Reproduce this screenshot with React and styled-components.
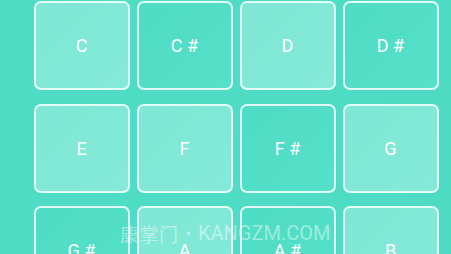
import React from "react";
import styled, { createGlobalStyle } from "styled-components";

const GlobalStyle = createGlobalStyle`
  html, body {
    margin: 0;
    padding: 0;
    background: #4fdcc4;
    overflow: hidden;
  }
  body {
    font-family: Roboto, "Noto Sans", sans-serif;
  }
`;

const notes = [
  { name: "C", light: true },
  { name: "C #", light: false },
  { name: "D", light: true },
  { name: "D #", light: false },
  { name: "E", light: true },
  { name: "F", light: true },
  { name: "F #", light: false },
  { name: "G", light: true },
  { name: "G #", light: false },
  { name: "A", light: true },
  { name: "A #", light: false },
  { name: "B", light: true },
];

export default function App() {
  return (
    <>
      <GlobalStyle />
      <Screen>
        <Pad>
          {notes.map((note) => (
            <Key key={note.name} $light={note.light}>
              {note.name}
            </Key>
          ))}
        </Pad>
        <Watermark>
          <Han>康掌门</Han>
          <Dot>•</Dot>
          <Site>KANGZM.COM</Site>
        </Watermark>
      </Screen>
    </>
  );
}

const Screen = styled.div`
  position: relative;
  width: 451px;
  height: 254px;
  overflow: hidden;
  background: linear-gradient(90deg, #50ddc5 0%, #4edbc3 100%);
`;

const Pad = styled.div`
  display: grid;
  grid-template-columns: repeat(4, 96px);
  grid-auto-rows: 89px;
  column-gap: 7px;
  row-gap: 13.5px;
  padding: 1px 0 0 33.5px;
`;

const Key = styled.div`
  box-sizing: border-box;
  display: flex;
  align-items: center;
  justify-content: center;
  border: 2px solid rgba(240, 255, 251, 0.9);
  border-radius: 7px;
  color: #ffffff;
  font-size: 18px;
  background: ${(p) =>
    p.$light
      ? "linear-gradient(135deg, #7fe7d5 0%, #84e9d8 100%)"
      : "linear-gradient(135deg, #4fdcc4 0%, #55e0c9 100%)"};
`;

const Watermark = styled.div`
  position: absolute;
  left: 120px;
  top: 220px;
  display: flex;
  align-items: center;
  height: 26px;
  color: rgba(255, 255, 255, 0.45);
  white-space: nowrap;
`;

const Han = styled.span`
  font-family: "Noto Sans CJK SC", sans-serif;
  font-size: 19px;
  letter-spacing: 0.5px;
`;

const Dot = styled.span`
  margin: 0 7px 0 7px;
  font-family: Roboto, sans-serif;
  font-size: 16px;
`;

const Site = styled.span`
  font-family: Roboto, sans-serif;
  font-size: 20px;
`;
